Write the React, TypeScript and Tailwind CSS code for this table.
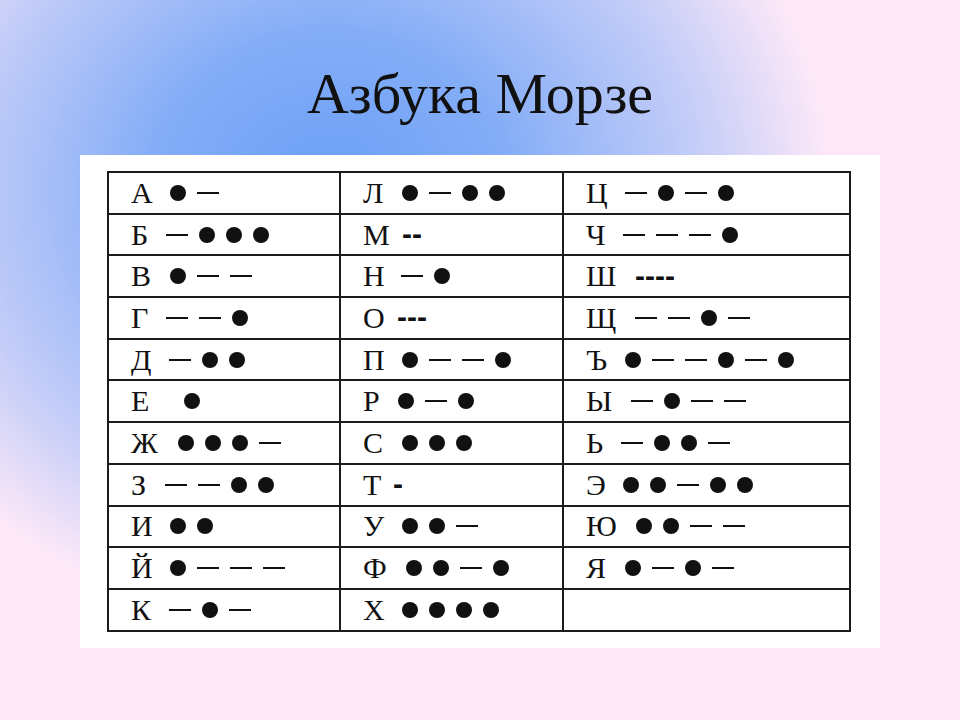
type Entry = {
  letter: string
  code?: string
  txt?: string
  shift: string
}

// '.' = dot, '-' = dash
const columns: Entry[][] = [
  [
    { letter: 'А', code: '.-', shift: 'ml-[1px]' },
    { letter: 'Б', code: '-...', shift: 'ml-[-3px]' },
    { letter: 'В', code: '.--', shift: 'ml-[1px]' },
    { letter: 'Г', code: '--.', shift: 'ml-[-3px]' },
    { letter: 'Д', code: '-..', shift: 'ml-[0px]' },
    { letter: 'Е', code: '.', shift: 'ml-[15px]' },
    { letter: 'Ж', code: '...-', shift: 'ml-[9px]' },
    { letter: 'З', code: '--..', shift: 'ml-[-4px]' },
    { letter: 'И', code: '..', shift: 'ml-[1px]' },
    { letter: 'Й', code: '.---', shift: 'ml-[1px]' },
    { letter: 'К', code: '-.-', shift: 'ml-[0px]' },
  ],
  [
    { letter: 'Л', code: '.-..', shift: 'ml-[1px]' },
    { letter: 'М', txt: '--', shift: 'ml-[1px]' },
    { letter: 'Н', code: '-.', shift: 'ml-[0px]' },
    { letter: 'О', txt: '---', shift: 'ml-[-4px]' },
    { letter: 'П', code: '.--.', shift: 'ml-[1px]' },
    { letter: 'Р', code: '.-.', shift: 'ml-[-3px]' },
    { letter: 'С', code: '...', shift: 'ml-[1px]' },
    { letter: 'Т', txt: '-', shift: 'ml-[-8px]' },
    { letter: 'У', code: '..-', shift: 'ml-[1px]' },
    { letter: 'Ф', code: '..-.', shift: 'ml-[5px]' },
    { letter: 'Х', code: '....', shift: 'ml-[1px]' },
  ],
  [
    { letter: 'Ц', code: '-.-.', shift: 'ml-[1px]' },
    { letter: 'Ч', code: '---.', shift: 'ml-[-1px]' },
    { letter: 'Ш', txt: '----', shift: 'ml-[11px]' },
    { letter: 'Щ', code: '--.-', shift: 'ml-[11px]' },
    { letter: 'Ъ', code: '.--.-.', shift: 'ml-[1px]' },
    { letter: 'Ы', code: '-.--', shift: 'ml-[7px]' },
    { letter: 'Ь', code: '-..-', shift: 'ml-[-3px]' },
    { letter: 'Э', code: '..-..', shift: 'ml-[-1px]' },
    { letter: 'Ю', code: '..--', shift: 'ml-[12px]' },
    { letter: 'Я', code: '.-.-', shift: 'ml-[1px]' },
    { letter: '', shift: 'ml-0' },
  ],
]

const colWidths = ['w-[232px]', 'w-[223px]', 'w-[287px]']

const Code = ({ code }: { code: string }) => (
  <div className="flex items-center gap-[11px]">
    {code.split('').map((c, i) =>
      c === '.' ? (
        <span key={i} className="block w-4 h-4 rounded-full bg-[#111]" />
      ) : (
        <span key={i} className="block w-[22px] h-[2px] bg-[#111]" />
      )
    )}
  </div>
)

const Cell = ({ entry }: { entry: Entry }) => (
  <div className="flex items-center h-full pl-[22px]">
    <span className="w-[38px] shrink-0 text-[30px] leading-none font-['Liberation_Serif',serif] text-[#111]">
      {entry.letter}
    </span>
    <div className={entry.shift}>
      {entry.code && <Code code={entry.code} />}
      {entry.txt && (
        <span className="text-[30px] leading-none font-bold font-['Liberation_Sans',sans-serif] text-[#111]">
          {entry.txt}
        </span>
      )}
    </div>
  </div>
)

export default function App() {
  const rows = columns[0].map((_, r) => columns.map((col) => col[r]))

  return (
    <div className="w-[960px] h-[720px] overflow-hidden bg-[radial-gradient(ellipse_500px_440px_at_330px_190px,#6b9ff6_0%,#84adf7_36%,#c4cdf8_74%,#fde8f8_100%)]">
      <h1 className="pt-[65px] text-center text-[58px] leading-none font-['Liberation_Serif',serif] text-[#111]">
        Азбука Морзе
      </h1>

      <div className="mt-[32px] mx-auto w-[800px] h-[493px] bg-white pt-4 pl-[27px]">
        <table className="border-collapse border-2 border-[#1c1c1c]">
          <tbody>
            {rows.map((row, r) => (
              <tr key={r} className="h-[41.7px]">
                {row.map((entry, c) => (
                  <td key={c} className={`${colWidths[c]} p-0 border-2 border-[#1c1c1c]`}>
                    <Cell entry={entry} />
                  </td>
                ))}
              </tr>
            ))}
          </tbody>
        </table>
      </div>
    </div>
  )
}
